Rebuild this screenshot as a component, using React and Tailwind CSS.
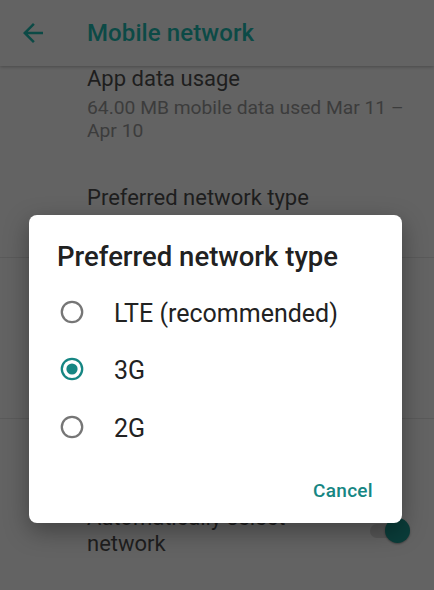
import React from "react";

function Radio({ checked }) {
  return (
    <svg width="24" height="24" viewBox="0 0 24 24" className="shrink-0">
      <circle
        cx="12"
        cy="12"
        r="10.2"
        fill="none"
        stroke={checked ? "#168683" : "#767676"}
        strokeWidth="2.3"
      />
      {checked && <circle cx="12" cy="12" r="5.6" fill="#168683" />}
    </svg>
  );
}

export default function App() {
  const font = { fontFamily: "Roboto, 'Noto Sans', sans-serif" };
  return (
    <div
      className="relative w-[434px] h-[590px] overflow-hidden bg-[#636363]"
      style={font}
    >
      {/* Header */}
      <div className="h-[66px] flex items-center bg-[#636363] shadow-[0_1px_3px_rgba(0,0,0,0.25)] relative z-10">
        <svg
          width="30"
          height="30"
          viewBox="0 0 24 24"
          className="ml-[18px] shrink-0"
          fill="#0c4a46"
        >
          <path d="M20 11H7.83l5.59-5.59L12 4l-8 8 8 8 1.41-1.41L7.83 13H20v-2z" />
        </svg>
        <div className="ml-[39px] text-[24px] leading-[32px] font-medium text-[#0c4a46] tracking-[0.1px]">
          Mobile network
        </div>
      </div>

      {/* List */}
      <div className="pl-[87px] pr-[24px]">
        <div className="h-[119px]">
          <div className="text-[22px] leading-[26px] text-[#1e1e1e]">
            App data usage
          </div>
          <div className="mt-[4px] text-[19.25px] leading-[23px] text-[#3c3c3c]">
            64.00 MB mobile data used Mar 11 – Apr 10
          </div>
        </div>
        <div className="h-[72px]">
          <div className="text-[22px] leading-[26px] text-[#1e1e1e]">
            Preferred network type
          </div>
          <div className="mt-[4px] text-[19.25px] leading-[23px] text-[#3c3c3c]">
            3G
          </div>
        </div>
      </div>
      <div className="h-px bg-[#5a5a5a]" />
      <div className="h-[160px]" />
      <div className="h-px bg-[#5a5a5a]" />
      <div className="pl-[87px] pr-[24px] pt-[86px] flex items-center">
        <div className="flex-1 text-[22px] leading-[26px] text-[#1e1e1e]">
          Automatically select
          <br />
          network
        </div>
        <div className="relative w-[40px] h-[26px] flex items-center">
          <div className="w-[38px] h-[14px] rounded-full bg-[#575757]" />
          <div className="absolute right-0 top-0 w-[25px] h-[25px] rounded-full bg-[#0a3d3a] shadow-[0_1px_2px_rgba(0,0,0,0.35)]" />
        </div>
      </div>

      {/* Dialog */}
      <div className="absolute left-[29px] top-[215px] w-[373px] h-[308px] bg-white rounded-[8px] shadow-[0_8px_24px_rgba(0,0,0,0.35)] flex flex-col">
        <div className="pl-[28px] pt-[25px] text-[27.5px] leading-[34px] font-medium text-[#212121]">
          Preferred network type
        </div>
        <div className="mt-[9px] flex flex-col">
          {[
            ["LTE (recommended)", false],
            ["3G", true],
            ["2G", false],
          ].map(([label, checked]) => (
            <div key={label} className="h-[57.5px] flex items-center pl-[31px]">
              <Radio checked={checked} />
              <div className="ml-[30px] pt-[4px] text-[25px] leading-[32px] text-[#222222]">
                {label}
              </div>
            </div>
          ))}
        </div>
        <div className="mt-[23.5px] flex justify-end pr-[29px]">
          <div className="text-[19px] leading-[24px] font-medium text-[#168683] tracking-[0.3px]">
            Cancel
          </div>
        </div>
      </div>
    </div>
  );
}
